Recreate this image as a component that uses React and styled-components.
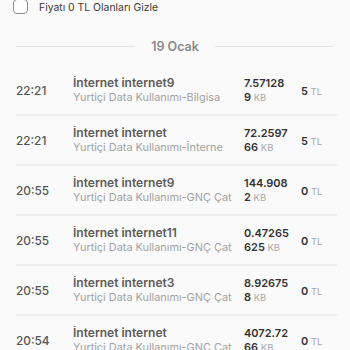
import React from "react";
import styled, { createGlobalStyle } from "styled-components";

const GlobalStyle = createGlobalStyle`
  body {
    margin: 0;
    background: #fafafa;
    font-family: "Inter", "Lato", sans-serif;
  }
`;

const rows = [
  { time: "22:21", title: "İnternet internet9", sub: "Yurtiçi Data Kullanımı-Bilgisa", amount: "7.57128", size: "9", price: "5" },
  { time: "22:21", title: "İnternet internet", sub: "Yurtiçi Data Kullanımı-İnterne", amount: "72.2597", size: "66", price: "5" },
  { time: "20:55", title: "İnternet internet9", sub: "Yurtiçi Data Kullanımı-GNÇ Çat", amount: "144.908", size: "2", price: "0" },
  { time: "20:55", title: "İnternet internet11", sub: "Yurtiçi Data Kullanımı-GNÇ Çat", amount: "0.47265", size: "625", price: "0" },
  { time: "20:55", title: "İnternet internet3", sub: "Yurtiçi Data Kullanımı-GNÇ Çat", amount: "8.92675", size: "8", price: "0" },
  { time: "20:54", title: "İnternet internet", sub: "Yurtiçi Data Kullanımı-GNÇ Çat", amount: "4072.72", size: "66", price: "0" },
];

const App = () => {
  return (
    <>
      <GlobalStyle />
      <Page>
        <FilterRow>
          <CheckBox />
          <FilterLabel>Fiyatı 0 TL Olanları Gizle</FilterLabel>
        </FilterRow>
        <DateDivider>
          <Line />
          <DateText>19 Ocak</DateText>
          <Line />
        </DateDivider>
        <List>
          {rows.map((r, i) => (
            <Row key={i}>
              <Time>{r.time}</Time>
              <Info>
                <Title>{r.title}</Title>
                <Sub>{r.sub}</Sub>
              </Info>
              <Usage>
                <Amount>{r.amount}</Amount>
                <Size>
                  <b>{r.size}</b> KB
                </Size>
              </Usage>
              <Price>
                <b>{r.price}</b> TL
              </Price>
            </Row>
          ))}
        </List>
      </Page>
    </>
  );
};
export default App;

const Page = styled.div`
  padding: 0 16px;
`;

const FilterRow = styled.div`
  display: flex;
  align-items: center;
  gap: 11px;
  height: 14px;
  margin-left: -3px;
`;

const CheckBox = styled.div`
  width: 13px;
  height: 13px;
  margin-top: -2px;
  border: 1.5px solid #8c8c8c;
  border-radius: 4px;
  background: #fff;
`;

const FilterLabel = styled.span`
  font-size: 10.4px;
  color: #3a3a3a;
`;

const DateDivider = styled.div`
  display: flex;
  align-items: center;
  gap: 16px;
  margin-top: 22px;
  height: 20px;
`;

const Line = styled.div`
  flex: 1;
  height: 1px;
  background: #e4e4e4;
`;

const DateText = styled.span`
  font-size: 12.5px;
  font-weight: 600;
  color: #8a8a8a;
`;

const List = styled.div`
  margin-top: 10px;
  margin-right: -3px;
`;

const Row = styled.div`
  display: grid;
  grid-template-columns: 57px 171px 57px 1fr;
  align-items: center;
  height: 48px;
  border-bottom: 2px solid #efefef;
`;

const Time = styled.span`
  font-size: 11.8px;
  font-weight: 500;
  color: #555;
  margin-top: 2px;
`;

const Info = styled.div`
  display: flex;
  flex-direction: column;
  overflow: hidden;
`;

const Title = styled.span`
  font-size: 12px;
  line-height: 14px;
  font-weight: 600;
  color: #5c5c5c;
  white-space: nowrap;
`;

const Sub = styled.span`
  font-size: 10.9px;
  line-height: 14px;
  color: #a3a3a3;
  white-space: nowrap;
`;

const Usage = styled.div`
  display: flex;
  flex-direction: column;
`;

const Amount = styled.span`
  font-size: 11px;
  line-height: 14px;
  font-weight: 600;
  color: #333;
`;

const Size = styled.span`
  font-size: 9.5px;
  line-height: 14px;
  color: #a8a8a8;

  b {
    font-size: 11px;
    font-weight: 600;
    color: #333;
  }
`;

const Price = styled.span`
  font-size: 9.5px;
  color: #a8a8a8;
  margin-top: 2px;

  b {
    font-size: 11px;
    font-weight: 600;
    color: #333;
  }
`;
